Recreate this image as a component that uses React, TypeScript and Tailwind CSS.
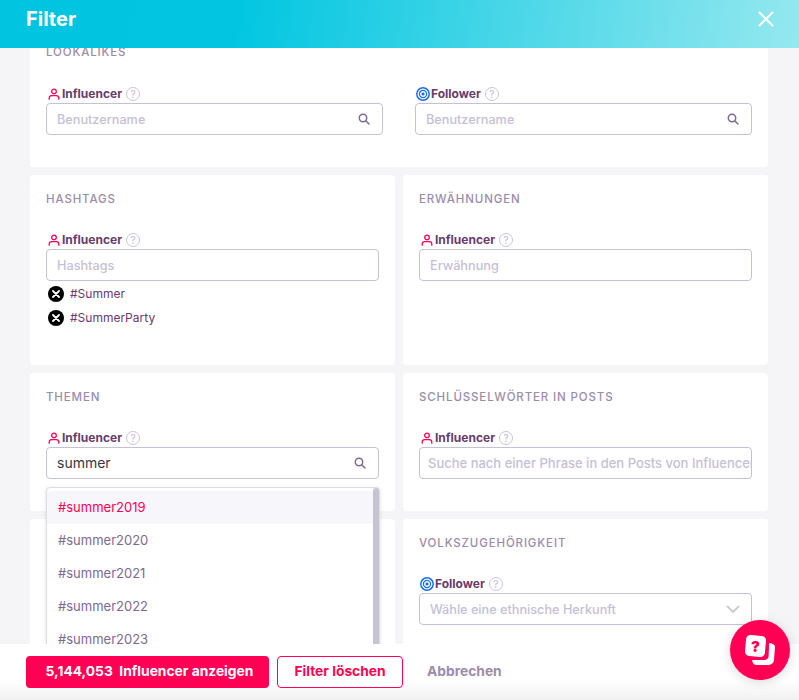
const font = '[font-family:Inter,sans-serif]';

function PersonIcon() {
  return (
    <svg width="12" height="12" viewBox="0 0 12 12" fill="none" stroke="#ff0055" strokeWidth="1.3" strokeLinecap="round" className="shrink-0">
      <circle cx="6" cy="3.4" r="2.3" />
      <path d="M1.2 11.2V10a2.4 2.4 0 0 1 2.4-2.3h4.8A2.4 2.4 0 0 1 10.8 10v1.2" />
    </svg>
  );
}

function TargetIcon() {
  return (
    <svg width="14" height="14" viewBox="0 0 14 14" fill="none" stroke="#1a6fe8" className="shrink-0">
      <circle cx="7" cy="7" r="6.2" strokeWidth="1.5" />
      <circle cx="7" cy="7" r="3.6" strokeWidth="1.2" />
      <circle cx="7" cy="7" r="1.3" fill="#1a6fe8" strokeWidth="0.5" />
    </svg>
  );
}

function HelpIcon() {
  return (
    <span className="ml-[4px] flex h-[14px] w-[14px] items-center justify-center rounded-full border border-[#c9c3dd] text-[10px] leading-none text-[#c0b9d6]">?</span>
  );
}

function Label({ kind }: { kind: 'i' | 'f' }) {
  return (
    <div className={`flex h-[14px] items-center ${kind === 'i' ? 'pl-[2px]' : 'pl-px'}`}>
      {kind === 'i' ? <PersonIcon /> : <TargetIcon />}
      <span className={`text-[12px] font-bold text-[#673c6d] ${kind === 'i' ? 'ml-[2px]' : 'ml-px'}`}>
        {kind === 'i' ? 'Influencer' : 'Follower'}
      </span>
      <HelpIcon />
    </div>
  );
}

function SearchIcon() {
  return (
    <svg width="12" height="12" viewBox="0 0 12 12" fill="none" stroke="#7d6a90" strokeWidth="1.5" strokeLinecap="round" className="shrink-0">
      <circle cx="5" cy="5" r="3.7" />
      <path d="M8 8l3 3" />
    </svg>
  );
}

function Field({ placeholder, value, icon, clip }: { placeholder?: string; value?: string; icon?: 'search' | 'chevron'; clip?: boolean }) {
  const text = value
    ? 'pb-[2px] text-[14px] text-[#3c3542]'
    : clip
      ? 'pt-[2px] text-[13px] font-medium text-[#c6c0d6]'
      : 'pt-[2px] text-[12.7px] font-medium text-[#c6c0d6]';
  return (
    <div className={`mt-[2px] flex h-[32px] items-center overflow-hidden rounded-[4px] border border-[#c6c0d6] bg-white ${clip ? '' : 'pr-[12px]'}`}>
      <span className={`${clip ? 'pl-2' : 'pl-[10px]'} flex-1 overflow-hidden whitespace-nowrap ${text}`}>
        {value ?? placeholder}
      </span>
      {icon === 'search' && <SearchIcon />}
      {icon === 'chevron' && (
        <svg width="14" height="9" viewBox="0 0 14 9" fill="none" stroke="#cfcbd6" strokeWidth="2" strokeLinecap="round" strokeLinejoin="round" className="-mr-[1px] shrink-0">
          <path d="M1.5 1.5L7 7l5.5-5.5" />
        </svg>
      )}
    </div>
  );
}

function Title({ children }: { children: string }) {
  return <div className="text-[11.5px] font-medium leading-[14px] tracking-[0.075em] text-[#9c8cab]">{children}</div>;
}

function Card({ className, children }: { className: string; children: React.ReactNode }) {
  return <section className={`rounded-[4px] bg-white px-4 ${className}`}>{children}</section>;
}

function Tag({ text }: { text: string }) {
  return (
    <div className="flex h-[24px] items-center">
      <span className="ml-[2px] flex h-[16px] w-[16px] items-center justify-center rounded-full bg-black">
        <svg width="8" height="8" viewBox="0 0 8 8" stroke="white" strokeWidth="1.8" strokeLinecap="round">
          <path d="M1 1l6 6M7 1L1 7" />
        </svg>
      </span>
      <span className="ml-[6px] text-[12px] text-[#673c6d]">{text}</span>
    </div>
  );
}

function Dropdown() {
  const items = ['#summer2019', '#summer2020', '#summer2021', '#summer2022', '#summer2023', '#summer2024'];
  return (
    <div className="absolute left-4 top-[114px] z-10 h-[220px] w-[334px] rounded-[4px] border border-[#dedde3] bg-white pt-[3px] shadow-[0_1px_4px_rgba(0,0,0,0.12)]">
      <ul>
        {items.map((t, i) => (
          <li key={t} className={`flex h-[33px] items-center pl-[11px] text-[13px] ${i === 0 ? 'bg-[#f7f7fb] text-[#ff0055]' : 'text-[#7d6a90]'}`}>
            {t}
          </li>
        ))}
      </ul>
      <div className="absolute right-0 top-0 h-full w-[6px] rounded-[3px] bg-[#c6c4d3]" />
    </div>
  );
}

function QuestionLogo() {
  return (
    <svg width="32" height="32" viewBox="0 0 32 32">
      <rect x="1.5" y="1.5" width="20" height="21" rx="4.5" fill="white" transform="rotate(5 11.5 12)" />
      <path d="M25.2 9c3.6.3 5.8 1.6 5.8 4l-1 13a5.4 5.4 0 0 1-5.4 5H12.5c-2.4 0-4.2-2-4.4-5H20.5a4.5 4.5 0 0 0 4.1-4z" fill="white" />
      <text x="11.5" y="18" textAnchor="middle" fontSize="15" fontWeight="900" fill="#ff0055" fontFamily="Inter, sans-serif">?</text>
    </svg>
  );
}

export default function App() {
  return (
    <div className={`relative flex h-[700px] w-[799px] flex-col overflow-hidden bg-[#f5f5f8] ${font}`}>
      <header className="z-20 flex h-12 shrink-0 items-center justify-between bg-[linear-gradient(100deg,#00c4e0_0%,#02c6e1_30%,#95e8ef_100%)] pb-[10px] pl-[26px] pr-[25px]">
        <h1 className="text-[20px] font-bold text-white">Filter</h1>
        <svg width="16" height="16" viewBox="0 0 16 16" stroke="white" strokeWidth="2" strokeLinecap="round">
          <path d="M1.5 1.5l13 13M14.5 1.5l-13 13" />
        </svg>
      </header>

      <main className="relative flex min-h-0 flex-1 flex-col gap-2 overflow-hidden pl-[30px] pr-[31px]">
        <Card className="-mt-5 h-[139px] shrink-0 pt-[17px]">
          <Title>LOOKALIKES</Title>
          <div className="mt-[28px] grid grid-cols-[337px_337px] gap-x-[32px]">
            <div><Label kind="i" /><Field placeholder="Benutzername" icon="search" /></div>
            <div><Label kind="f" /><Field placeholder="Benutzername" icon="search" /></div>
          </div>
        </Card>

        <div className="grid shrink-0 grid-cols-2 gap-2">
          <Card className="h-[190px] pt-[17px]">
            <Title>HASHTAGS</Title>
            <div className="mt-[27px]"><Label kind="i" /><Field placeholder="Hashtags" /></div>
            <div className="mt-[1px]">
              <Tag text="#Summer" />
              <Tag text="#SummerParty" />
            </div>
          </Card>
          <Card className="h-[190px] pt-[17px]">
            <Title>ERWÄHNUNGEN</Title>
            <div className="mt-[27px]"><Label kind="i" /><Field placeholder="Erwähnung" /></div>
          </Card>
        </div>

        <div className="grid shrink-0 grid-cols-2 gap-2">
          <Card className="relative h-[138px] pt-[17px]">
            <Title>THEMEN</Title>
            <div className="mt-[27px]"><Label kind="i" /><Field value="summer" icon="search" /></div>
            <Dropdown />
          </Card>
          <Card className="h-[138px] pt-[17px]">
            <Title>SCHLÜSSELWÖRTER IN POSTS</Title>
            <div className="mt-[27px]"><Label kind="i" /><Field placeholder="Suche nach einer Phrase in den Posts von Influencern" clip /></div>
          </Card>
        </div>

        <div className="grid shrink-0 grid-cols-2 gap-2">
          <Card className="h-[138px]"><span /></Card>
          <Card className="h-[138px] pt-[17px]">
            <Title>VOLKSZUGEHÖRIGKEIT</Title>
            <div className="mt-[27px]"><Label kind="f" /><Field placeholder="Wähle eine ethnische Herkunft" icon="chevron" /></div>
          </Card>
        </div>
      </main>

      <footer className="z-20 flex h-14 shrink-0 items-start bg-[linear-gradient(180deg,#ffffff_0%,#ffffff_65%,#f1f1f1_100%)] pl-[26px] pt-3">
        <button className="flex h-8 w-[243px] items-center justify-center rounded-[4px] bg-[#ff0055] pb-[2px] pl-1 text-[13.8px] font-bold text-white">
          5,144,053&nbsp;&nbsp;Influencer anzeigen
        </button>
        <button className="ml-2 h-8 w-[126px] rounded-[4px] border border-[#ff0055] bg-white pb-[2px] text-[13.8px] font-bold text-[#ff0055]">
          Filter löschen
        </button>
        <button className="ml-6 h-8 pb-[2px] text-[13.8px] font-bold text-[#9c8cab]">Abbrechen</button>
      </footer>

      <button className="absolute left-[730px] top-[620px] z-30 flex h-[60px] w-[60px] items-center justify-center rounded-full bg-[#ff0055] shadow-[0_2px_12px_rgba(0,0,0,0.15)]">
        <QuestionLogo />
      </button>
    </div>
  );
}
